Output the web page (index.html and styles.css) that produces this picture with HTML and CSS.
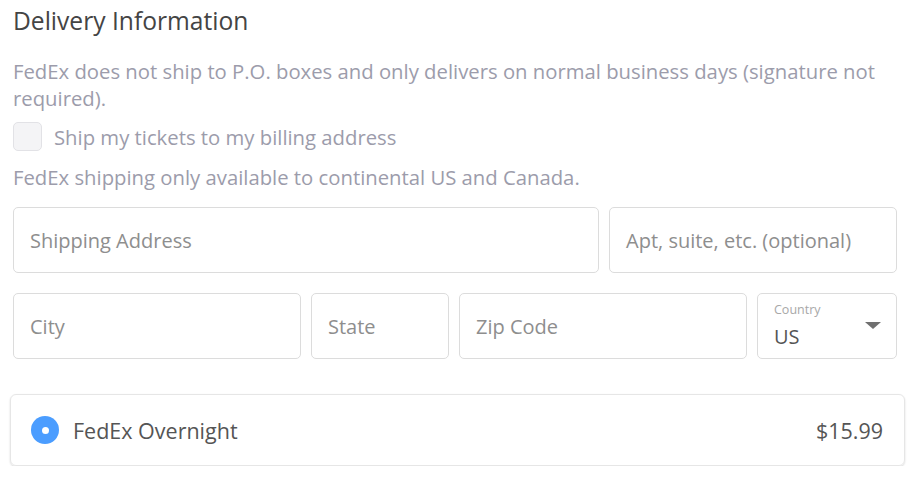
FILE: index.html
```html
<!DOCTYPE html>
<html lang="en">
<head>
  <meta charset="UTF-8" />
  <title>Delivery Information</title>
  <link rel="stylesheet" href="styles.css">
</head>
<body>
  <div class="delivery">
    <h2 class="title">Delivery Information</h2>
    <p class="note">FedEx does not ship to P.O. boxes and only delivers on normal business days (signature not required).</p>
    <label class="check">
      <span class="box"></span>
      Ship my tickets to my billing address
    </label>
    <p class="note note-small">FedEx shipping only available to continental US and Canada.</p>

    <div class="row row-address">
      <div class="field">Shipping Address</div>
      <div class="field">Apt, suite, etc. (optional)</div>
    </div>
    <div class="row row-city">
      <div class="field">City</div>
      <div class="field">State</div>
      <div class="field">Zip Code</div>
      <div class="field select">
        <div class="select-text">
          <span class="select-label">Country</span>
          <span class="select-value">US</span>
        </div>
        <span class="caret"></span>
      </div>
    </div>
  </div>

  <div class="option">
    <span class="radio"><span class="dot"></span></span>
    <span class="option-name">FedEx Overnight</span>
    <span class="option-price">$15.99</span>
  </div>
</body>
</html>
```

FILE: styles.css
```css
body {
  margin: 0;
  padding: 6px 10px 0 10px;
  font-family: "Open Sans", "Liberation Sans", sans-serif;
  background: #fff;
  color: #555;
}
.delivery {
  padding: 0 8px 0 3px;
}
.title {
  margin: 0;
  font-size: 24.6px;
  font-weight: 400;
  line-height: 29px;
  color: #444;
}
.note {
  margin: 23px 0 0 0;
  font-size: 20.3px;
  line-height: 27px;
  color: #9c9cab;
}
.note-small {
  margin-top: 13px;
}
.check {
  display: flex;
  align-items: center;
  gap: 12px;
  margin-top: 10px;
  font-size: 20.3px;
  color: #9c9cab;
}
.box {
  width: 27px;
  height: 27px;
  border: 1px solid #e2e2e6;
  border-radius: 5px;
  background: #f4f4f6;
}
.row {
  display: grid;
  gap: 10px;
}
.row-address {
  grid-template-columns: 1fr 288px;
  margin-top: 16px;
}
.row-city {
  grid-template-columns: 288px 138px 288px 1fr;
  margin-top: 20px;
}
.field {
  height: 64px;
  border: 1px solid #dcdcdc;
  border-radius: 5px;
  padding: 0 16px;
  display: flex;
  align-items: center;
  font-size: 20px;
  color: #8e8e8e;
}
.select {
  justify-content: space-between;
  padding-right: 15px;
}
.select-text {
  display: flex;
  flex-direction: column;
}
.select-label {
  font-size: 12.5px;
  line-height: 14px;
  margin-bottom: 7px;
  color: #a8a8a8;
}
.select-value {
  font-size: 20px;
  line-height: 26px;
  color: #555;
}
.caret {
  width: 0;
  height: 0;
  border-left: 8px solid transparent;
  border-right: 8px solid transparent;
  border-top: 7px solid #707070;
  margin-top: -2px;
}
.option {
  display: flex;
  align-items: center;
  height: 70px;
  margin-top: 35px;
  padding: 0 21px 0 20px;
  border: 1px solid #e6e6e6;
  border-radius: 6px;
  box-shadow: 0 1px 2px rgba(0, 0, 0, 0.15);
  font-size: 21.5px;
  color: #555;
}
.radio {
  width: 28px;
  height: 28px;
  border-radius: 50%;
  background: #4b9dff;
  display: flex;
  align-items: center;
  justify-content: center;
  margin-right: 14px;
}
.dot {
  width: 7px;
  height: 7px;
  border-radius: 50%;
  background: #fff;
}
.option-name {
  flex: 1;
}
```
